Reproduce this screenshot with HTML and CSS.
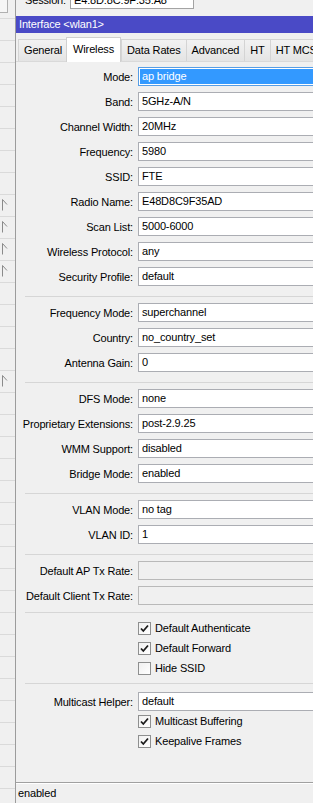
FILE: index.html
```html
<!DOCTYPE html>
<html lang="en">
<head>
  <meta charset="UTF-8" />
  <meta name="viewport" content="width=device-width, initial-scale=1.0"/>
  <title>Interface &lt;wlan1&gt;</title>
  <link rel="stylesheet" href="styles.css">
</head>
<body>
  <div class="desktop">

    <aside class="side">
      <div class="side-top"><div class="side-btn"></div></div>
      <div class="side-row"></div>
      <div class="side-row"></div>
      <div class="side-row"></div>
      <div class="side-row"></div>
      <div class="side-row"></div>
      <div class="side-row"></div>
      <div class="side-row"></div>
      <div class="side-row"></div>
      <div class="side-row"><svg class="flag" width="8" height="12" viewBox="0 0 8 12"><path d="M1.5 0.5V11.5M1.5 0.5L6 5.5"/></svg></div>
      <div class="side-row"><svg class="flag" width="8" height="12" viewBox="0 0 8 12"><path d="M1.5 0.5V11.5M1.5 0.5L6 5.5"/></svg></div>
      <div class="side-row"><svg class="flag" width="8" height="12" viewBox="0 0 8 12"><path d="M1.5 0.5V11.5M1.5 0.5L6 5.5"/></svg></div>
      <div class="side-row"><svg class="flag" width="8" height="12" viewBox="0 0 8 12"><path d="M1.5 0.5V11.5M1.5 0.5L6 5.5"/></svg></div>
      <div class="side-row"></div>
      <div class="side-row"></div>
      <div class="side-row"></div>
      <div class="side-row"></div>
      <div class="side-row"><svg class="flag" width="8" height="12" viewBox="0 0 8 12"><path d="M1.5 0.5V11.5M1.5 0.5L6 5.5"/></svg></div>
      <div class="side-row"></div>
      <div class="side-row"></div>
      <div class="side-row"></div>
      <div class="side-row"></div>
      <div class="side-row"></div>
      <div class="side-row"></div>
      <div class="side-row"></div>
      <div class="side-row"></div>
      <div class="side-row"></div>
      <div class="side-row"></div>
      <div class="side-row"></div>
      <div class="side-row"></div>
      <div class="side-row"></div>
      <div class="side-row"></div>
      <div class="side-row"></div>
      <div class="side-row"></div>
      <div class="side-row"></div>
      <div class="side-row"></div>
      <div class="side-row"></div>
    </aside>

    <main class="main">
      <div class="session">
        <div class="session-inner">
          <span>Session:</span>
          <span class="session-box">E4:8D:8C:9F:35:A8</span>
        </div>
      </div>

      <section class="window">
        <div class="titlebar">Interface &lt;wlan1&gt;</div>

        <div class="tabs">
          <div class="tab">General</div>
          <div class="tab active">Wireless</div>
          <div class="tab">Data Rates</div>
          <div class="tab">Advanced</div>
          <div class="tab">HT</div>
          <div class="tab">HT MCS</div>
          <div class="tab">WDS</div>
        </div>

        <div class="panel">
          <div class="row"><span class="label">Mode:</span><div class="field focused"><span class="sel">ap bridge</span></div></div>
          <div class="row"><span class="label">Band:</span><div class="field">5GHz-A/N</div></div>
          <div class="row"><span class="label">Channel Width:</span><div class="field">20MHz</div></div>
          <div class="row"><span class="label">Frequency:</span><div class="field">5980</div></div>
          <div class="row"><span class="label">SSID:</span><div class="field">FTE</div></div>
          <div class="row"><span class="label">Radio Name:</span><div class="field">E48D8C9F35AD</div></div>
          <div class="row"><span class="label">Scan List:</span><div class="field">5000-6000</div></div>
          <div class="row"><span class="label">Wireless Protocol:</span><div class="field">any</div></div>
          <div class="row"><span class="label">Security Profile:</span><div class="field">default</div></div>
          <div class="sep"></div>

          <div class="row"><span class="label">Frequency Mode:</span><div class="field">superchannel</div></div>
          <div class="row"><span class="label">Country:</span><div class="field">no_country_set</div></div>
          <div class="row"><span class="label">Antenna Gain:</span><div class="field">0</div></div>
          <div class="sep"></div>

          <div class="row"><span class="label">DFS Mode:</span><div class="field">none</div></div>
          <div class="row"><span class="label">Proprietary Extensions:</span><div class="field">post-2.9.25</div></div>
          <div class="row"><span class="label">WMM Support:</span><div class="field">disabled</div></div>
          <div class="row"><span class="label">Bridge Mode:</span><div class="field">enabled</div></div>
          <div class="sep"></div>

          <div class="row"><span class="label">VLAN Mode:</span><div class="field">no tag</div></div>
          <div class="row"><span class="label">VLAN ID:</span><div class="field">1</div></div>
          <div class="sep"></div>

          <div class="row"><span class="label">Default AP Tx Rate:</span><div class="field disabled"></div></div>
          <div class="row"><span class="label">Default Client Tx Rate:</span><div class="field disabled"></div></div>
          <div class="sep sep-checks"></div>

          <label class="check-row"><span class="box checked"><svg width="11" height="11" viewBox="0 0 11 11"><path d="M2 5.5L4.3 8L9 2.5"/></svg></span>Default Authenticate</label>
          <label class="check-row"><span class="box checked"><svg width="11" height="11" viewBox="0 0 11 11"><path d="M2 5.5L4.3 8L9 2.5"/></svg></span>Default Forward</label>
          <label class="check-row"><span class="box"></span>Hide SSID</label>
          <div class="sep sep-after-checks"></div>

          <div class="row tight"><span class="label">Multicast Helper:</span><div class="field">default</div></div>
          <label class="check-row"><span class="box checked"><svg width="11" height="11" viewBox="0 0 11 11"><path d="M2 5.5L4.3 8L9 2.5"/></svg></span>Multicast Buffering</label>
          <label class="check-row"><span class="box checked"><svg width="11" height="11" viewBox="0 0 11 11"><path d="M2 5.5L4.3 8L9 2.5"/></svg></span>Keepalive Frames</label>
        </div>

        <div class="statusbar">enabled</div>
      </section>
    </main>

  </div>
</body>
</html>
```

FILE: styles.css
```css
html, body {
  margin: 0;
  padding: 0;
  height: 100%;
  overflow: hidden;
}

body {
  font-family: 'Liberation Sans', Arial, sans-serif;
  font-size: 11px;
  letter-spacing: -0.15px;
  color: #000;
  background: #f0f0f0;
}

.desktop {
  display: flex;
  height: 803px;
}

/* list on the left, mostly hidden behind the window */
.side {
  flex: none;
  width: 15px;
  border-right: 1px solid #9c9c9c;
  overflow: hidden;
}

.side-top {
  height: 18px;
}

.side-btn {
  width: 8px;
  height: 13px;
  box-sizing: border-box;
  border-right: 1px solid #b0b0b0;
  border-bottom: 1px solid #b0b0b0;
  background: #f6f6f6;
}

.side-row {
  height: 21px;
  border-top: 1px solid #dadada;
}

.flag {
  display: block;
  margin: 4px 0 0 1px;
  fill: none;
  stroke: #8a8a8a;
  stroke-width: 1;
}

.main {
  flex: none;
  width: 460px;
  display: flex;
  flex-direction: column;
}

.session {
  height: 16px;
  overflow: hidden;
}

.session-inner {
  display: flex;
  align-items: center;
  gap: 4px;
  margin-top: -10px;
  padding-left: 9px;
}

.session-box {
  width: 124px;
  height: 19px;
  box-sizing: border-box;
  border: 1px solid #a3a3a3;
  background: #fff;
  padding: 3px 3px 0;
}

.window {
  flex: 1;
  display: flex;
  flex-direction: column;
}

.titlebar {
  height: 17px;
  line-height: 17px;
  padding-left: 3px;
  background: #4a4ac6;
  color: #fff;
  font-size: 11px;
}

.tabs {
  display: flex;
  align-items: flex-end;
  height: 24px;
  margin-top: 4px;
  padding-left: 2px;
  border-bottom: 1px solid #d9d9d9;
}

.tab {
  height: 21px;
  line-height: 21px;
  padding: 0 5px;
  border: 1px solid #d4d4d4;
  border-bottom: none;
  margin-right: -1px;
  background: linear-gradient(#f2f2f2, #e4e4e4);
  white-space: nowrap;
}

.tab.active {
  position: relative;
  z-index: 1;
  height: 24px;
  line-height: 22px;
  margin: 0 0 -1px -1px;
  padding: 0 6px;
  background: #fff;
  border-color: #d0d0d0;
}

/* flex column so the separator margins add up instead of collapsing */
.panel {
  flex: 1;
  display: flex;
  flex-direction: column;
  padding-top: 5px;
}

.row {
  display: grid;
  grid-template-columns: 117px 1fr;
  column-gap: 5px;
  align-items: center;
  height: 19px;
  margin-bottom: 6px;
}

.row.tight {
  margin-bottom: 0;
}

.label {
  text-align: right;
  white-space: nowrap;
}

.field {
  height: 19px;
  box-sizing: border-box;
  border: 1px solid #abadb3;
  background: #fff;
  padding: 0 3px;
  line-height: 17px;
  white-space: nowrap;
}

.field.focused {
  border-color: #569de5;
  padding: 1px;
}

.sel {
  display: block;
  height: 15px;
  line-height: 15px;
  padding-left: 2px;
  background: #3399ff;
  color: #fff;
}

.field.disabled {
  background: #f0f0f0;
  border-color: #b9b9b9;
}

.sep {
  flex: none;
  height: 1px;
  margin: 4px 0 6px 9px;
  background: #d6d6d6;
}

.sep-checks {
  margin: 1px 0 5px 9px;
}

.sep-after-checks {
  margin: 5px 0 8px 9px;
}

.check-row {
  display: flex;
  align-items: center;
  gap: 4px;
  height: 20px;
  padding-left: 122px;
}

.box {
  display: flex;
  align-items: center;
  justify-content: center;
  width: 13px;
  height: 13px;
  box-sizing: border-box;
  border: 1px solid #8e8f8f;
  background: linear-gradient(135deg, #f0f0f0, #fff);
}

.box svg {
  fill: none;
  stroke: #1c1c1c;
  stroke-width: 1.8;
}

.statusbar {
  height: 20px;
  line-height: 20px;
  padding-left: 2px;
  border-top: 1px solid #a0a0a0;
  box-shadow: inset 0 1px #fff;
}
```
